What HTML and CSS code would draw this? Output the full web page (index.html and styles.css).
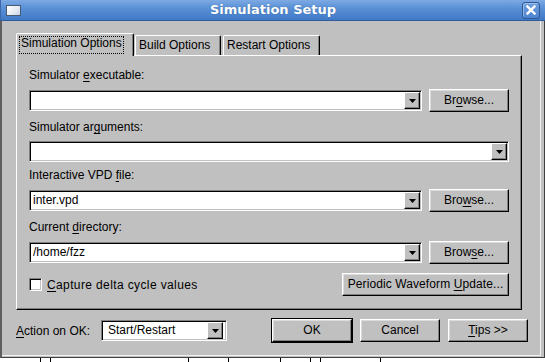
FILE: index.html
```html
<!DOCTYPE html>
<html>
<head>
<meta charset="utf-8">
<title>Simulation Setup</title>
<link rel="stylesheet" href="styles.css">
</head>
<body>
<div class="window">
  <div class="titlebar">
    <span class="win-icon"></span>
    <span class="title">Simulation Setup</span>
    <span class="close"><svg width="10" height="10" viewBox="0 0 10 10"><path d="M1.5 1.5L8.5 8.5M8.5 1.5L1.5 8.5" stroke="#fff" stroke-width="2.4" stroke-linecap="square"/></svg></span>
  </div>
  <div class="frame">
    <div class="client">
      <div class="tabs">
        <div class="tab active"><span class="focus">Simulation Options</span></div>
        <div class="tab build">Build Options</div>
        <div class="tab restart">Restart Options</div>
      </div>
      <div class="panel">
        <div class="group g1">
          <div class="label">Simulator <u>e</u>xecutable:</div>
          <div class="row">
            <div class="combo"><span class="ctext"></span><span class="arrow"><svg width="7" height="4" viewBox="0 0 7 4"><path d="M0 0H7L3.5 4Z" fill="#000"/></svg></span></div>
            <div class="btn browse">Br<u>o</u>wse...</div>
          </div>
        </div>
        <div class="group g2">
          <div class="label">Simulator ar<u>g</u>uments:</div>
          <div class="row short">
            <div class="combo"><span class="ctext"></span><span class="arrow"><svg width="7" height="4" viewBox="0 0 7 4"><path d="M0 0H7L3.5 4Z" fill="#000"/></svg></span></div>
          </div>
        </div>
        <div class="group g3">
          <div class="label">Interactive VPD <u>f</u>ile:</div>
          <div class="row">
            <div class="combo"><span class="ctext">inter.vpd</span><span class="arrow"><svg width="7" height="4" viewBox="0 0 7 4"><path d="M0 0H7L3.5 4Z" fill="#000"/></svg></span></div>
            <div class="btn browse">Bro<u>w</u>se...</div>
          </div>
        </div>
        <div class="group g4">
          <div class="label">Current <u>d</u>irectory:</div>
          <div class="row">
            <div class="combo"><span class="ctext">/home/fzz</span><span class="arrow"><svg width="7" height="4" viewBox="0 0 7 4"><path d="M0 0H7L3.5 4Z" fill="#000"/></svg></span></div>
            <div class="btn browse">Brow<u>s</u>e...</div>
          </div>
        </div>
        <div class="checkrow">
          <span class="checkbox"></span>
          <span class="checklabel"><u>C</u>apture delta cycle values</span>
          <div class="btn pwu">Periodic Waveform <u>U</u>pdate...</div>
        </div>
      </div>
      <div class="bottom">
        <span class="action-label"><u>A</u>ction on OK:</span>
        <div class="combo action"><span class="ctext">Start/Restart</span><span class="arrow"><svg width="7" height="4" viewBox="0 0 7 4"><path d="M0 0H7L3.5 4Z" fill="#000"/></svg></span></div>
        <div class="btn dlg default">OK</div>
        <div class="btn dlg">Cancel</div>
        <div class="btn dlg"><u>T</u>ips &gt;&gt;</div>
      </div>
    </div>
  </div>
</div>
<div class="under">
  <span class="tick t1"></span><span class="tick t2"></span><span class="tick t3"></span><span class="tick t4"></span><span class="tick t5"></span><span class="tick t6"></span><span class="tick t7"></span><span class="tick t8"></span>
</div>
</body>
</html>
```

FILE: styles.css
```css
* { box-sizing: border-box; }
html, body { margin: 0; padding: 0; }
body {
  width: 545px;
  height: 362px;
  overflow: hidden;
  background: #ffffff;
  font-family: "Liberation Sans", Arial, sans-serif;
  font-size: 12px;
  color: #000;
}
u { text-decoration: underline; text-underline-offset: 2px; }

.window {
  width: 545px;
  height: 358px;
  display: flex;
  flex-direction: column;
  background: #c0c0c0;
}

/* title bar */
.titlebar {
  height: 21px;
  flex: none;
  display: grid;
  grid-template-columns: 1fr auto 1fr;
  align-items: center;
  background: linear-gradient(#7eaae4, #5a90d6 40%, #4079c6 100%);
  border-bottom: 1px solid #2f5d9c;
  border-left: 1px solid #3a68a8;
}
.win-icon {
  justify-self: start;
  margin-left: 5px;
  width: 15px;
  height: 11px;
  border: 1px solid #4a5a70;
  background: linear-gradient(135deg, #ffffff, #e4eaf2 60%, #c6d2e2);
}
.title {
  font-family: "DejaVu Sans", sans-serif;
  font-weight: bold;
  font-size: 13px;
  color: #fff;
  text-shadow: 0 0 1px rgba(20, 50, 100, 0.5);
  line-height: 20px;
}
.close {
  justify-self: end;
  margin-right: 5px;
  width: 18px;
  height: 17px;
  border: 1px solid #2c5896;
  border-radius: 3px;
  background: linear-gradient(#6f9fe0, #4d83cf);
  box-shadow: inset 1px 1px 0 rgba(255,255,255,0.35);
  display: flex;
  align-items: center;
  justify-content: center;
}

/* window frame */
.frame {
  flex: 1;
  display: flex;
  border-left: 2px solid #5e5e5e;
  border-right: 1px solid #404040;
  border-bottom: 1px solid #404040;
}
.client {
  flex: 1;
  display: flex;
  flex-direction: column;
  margin-right: 3px;
  margin-bottom: 1px;
  border-right: 1px solid #f2f2f2;
  border-bottom: 1px solid #f2f2f2;
  padding: 12px 12px 0 14px;
}

/* tabs */
.tabs {
  display: flex;
  align-items: flex-end;
  height: 22px;
  flex: none;
}
.tab {
  height: 20px;
  background: #c0c0c0;
  border-top: 1px solid #fff;
  border-left: 1px solid #fff;
  border-right: 1px solid #000;
  box-shadow: inset -1px 0 0 #808080;
  border-radius: 2px 2px 0 0;
  padding: 2px 0 0 3px;
  line-height: 14px;
  white-space: nowrap;
}
.tab.active {
  width: 118px;
  height: 23px;
  margin-bottom: -1px;
  position: relative;
  z-index: 1;
  padding: 2px 0 0 2px;
}
.tab.build { width: 86px; margin-left: 1px; }
.tab.restart { width: 97px; margin-left: 2px; }
.focus {
  display: inline-block;
  vertical-align: top;
  border: 1px dotted #000;
  padding: 0 1px 3px;
  line-height: 13px;
}

/* panel */
.panel {
  flex: none;
  margin-right: 6px;
  background: #c0c0c0;
  border: 1px solid;
  border-color: #fff #000 #000 #fff;
  box-shadow: inset -1px -1px 0 #808080;
  padding: 12px 12px 13px 12px;
  display: flex;
  flex-direction: column;
}
.group { display: flex; flex-direction: column; gap: 7px; }
.g2 { margin-top: 8px; }
.g3 { margin-top: 6px; }
.g4 { margin-top: 8px; }
.label { line-height: 14px; height: 14px; white-space: nowrap; }
.row {
  display: flex;
  align-items: center;
  gap: 7px;
  height: 23px;
}
.row.short { height: 21px; }

/* combo box */
.combo {
  flex: 1;
  height: 21px;
  display: flex;
  background: #fff;
  border: 1px solid;
  border-color: #808080 #fff #fff #808080;
  box-shadow: inset 1px 1px 0 #000, inset -1px -1px 0 #c0c0c0;
  padding: 1px 1px 1px 3px;
}
.ctext {
  flex: 1;
  line-height: 17px;
  white-space: nowrap;
  overflow: hidden;
}
.arrow {
  width: 16px;
  height: 17px;
  flex: none;
  background: #c0c0c0;
  border: 1px solid;
  border-color: #fff #000 #000 #fff;
  box-shadow: inset -1px -1px 0 #808080;
  display: flex;
  align-items: center;
  justify-content: center;
}

/* buttons */
.btn {
  height: 23px;
  flex: none;
  background: #c0c0c0;
  border: 1px solid;
  border-color: #fff #000 #000 #fff;
  box-shadow: inset -1px -1px 0 #808080, inset 1px 1px 0 #dcdcdc;
  line-height: 21px;
  text-align: center;
  white-space: nowrap;
}
.browse { width: 80px; }

/* checkbox row */
.checkrow {
  margin-top: 9px;
  height: 23px;
  display: flex;
  align-items: center;
}
.checkbox {
  width: 13px;
  height: 13px;
  background: #fff;
  border: 1px solid;
  border-color: #808080 #fff #fff #808080;
  box-shadow: inset 1px 1px 0 #000, inset -1px -1px 0 #c0c0c0;
}
.checklabel { margin-left: 5px; line-height: 14px; letter-spacing: 0.38px; }
.pwu { margin-left: auto; width: 167px; letter-spacing: 0.1px; }

/* bottom row */
.bottom {
  margin-top: 9px;
  height: 23px;
  display: flex;
  align-items: center;
}
.action-label { width: 85px; flex: none; line-height: 14px; white-space: nowrap; }
.combo.action {
  flex: none;
  width: 126px;
  padding-left: 6px;
}
.combo.action .arrow { margin-right: 2px; }
.dlg { width: 80px; margin-left: 8px; }
.dlg.default {
  margin-left: auto;
  box-shadow: 0 0 0 1px #000, inset -1px -1px 0 #808080, inset 1px 1px 0 #dcdcdc;
}

/* strip below the window */
.under {
  position: relative;
  height: 4px;
  background: #fff;
}
.tick {
  position: absolute;
  top: 0;
  width: 1px;
  height: 4px;
  background: #000;
}
.t1 { left: 40px; }
.t2 { left: 50px; }
.t3 { left: 188px; }
.t4 { left: 228px; }
.t5 { left: 280px; }
.t6 { left: 310px; }
.t7 { left: 320px; }
.t8 { left: 380px; }
```
